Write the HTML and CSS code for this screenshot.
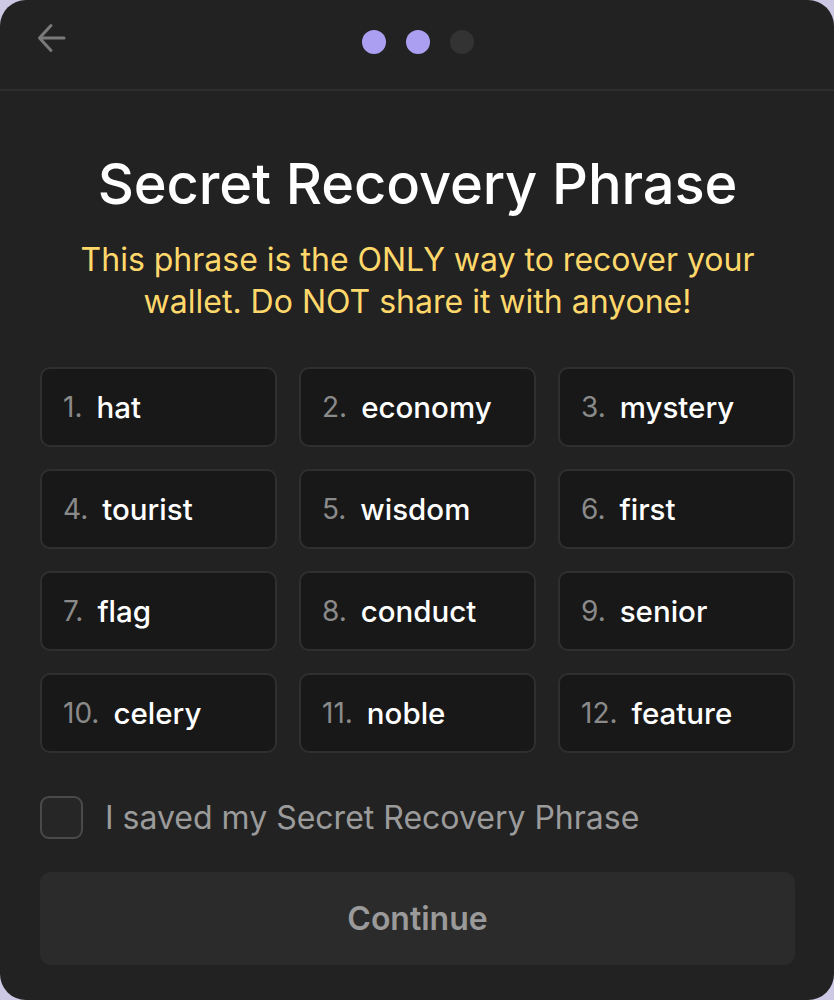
FILE: index.html
```html
<!DOCTYPE html>
<html>
<head>
<meta charset="utf-8">
<link rel="stylesheet" href="styles.css">
</head>
<body>
<div class="window">
  <header class="topbar">
    <button class="back" aria-label="Back">
      <svg width="30" height="30" viewBox="0 0 30 30" fill="none" stroke="#7a7a7a" stroke-width="3" stroke-linecap="round" stroke-linejoin="round">
        <path d="M28 15H4M15 2.5L3.5 15L15 27.5"/>
      </svg>
    </button>
    <div class="steps">
      <span class="dot on"></span>
      <span class="dot on"></span>
      <span class="dot"></span>
    </div>
  </header>
  <main class="content">
    <h1 class="title">Secret Recovery Phrase</h1>
    <p class="warning">This phrase is the ONLY way to recover your wallet. Do NOT share it with anyone!</p>
    <div class="grid">
      <div class="word"><span class="num">1.</span><span class="w">hat</span></div>
      <div class="word"><span class="num">2.</span><span class="w">economy</span></div>
      <div class="word"><span class="num">3.</span><span class="w">mystery</span></div>
      <div class="word"><span class="num">4.</span><span class="w">tourist</span></div>
      <div class="word"><span class="num">5.</span><span class="w">wisdom</span></div>
      <div class="word"><span class="num">6.</span><span class="w">first</span></div>
      <div class="word"><span class="num">7.</span><span class="w">flag</span></div>
      <div class="word"><span class="num">8.</span><span class="w">conduct</span></div>
      <div class="word"><span class="num">9.</span><span class="w">senior</span></div>
      <div class="word"><span class="num">10.</span><span class="w">celery</span></div>
      <div class="word"><span class="num">11.</span><span class="w">noble</span></div>
      <div class="word"><span class="num">12.</span><span class="w">feature</span></div>
    </div>
    <label class="check">
      <span class="box"></span>
      <span class="label">I saved my Secret Recovery Phrase</span>
    </label>
    <button class="continue">Continue</button>
  </main>
</div>
</body>
</html>
```
FILE: styles.css
```css
* { box-sizing: border-box; }
html, body {
  margin: 0;
  padding: 0;
  background: #cdc9e4;
}
body {
  font-family: Inter, "Noto Sans", sans-serif;
  width: 834px;
  height: 1000px;
  overflow: hidden;
}
.window {
  width: 834px;
  height: 1000px;
  background: #222222;
  border-radius: 26px;
  overflow: hidden;
  display: flex;
  flex-direction: column;
}
.topbar {
  height: 91px;
  flex: none;
  border-bottom: 2px solid #2e2e2e;
  display: flex;
  align-items: flex-start;
  justify-content: center;
  position: relative;
}
.back {
  position: absolute;
  left: 36px;
  top: 23px;
  background: none;
  border: 0;
  padding: 0;
  width: 30px;
  height: 30px;
  display: flex;
}
.steps {
  display: flex;
  gap: 20px;
  margin-top: 30px;
  margin-left: 2px;
}
.dot {
  width: 24px;
  height: 24px;
  border-radius: 50%;
  background: #333333;
}
.dot.on { background: #ab9ff2; }
.content {
  padding: 0 39px 0 40px;
  display: flex;
  flex-direction: column;
}
.title {
  margin: 60px 0 0;
  font-size: 56px;
  font-weight: 500;
  color: #ffffff;
  text-align: center;
  line-height: 66px;
  letter-spacing: -0.1px;
}
.warning {
  margin: 22px 18px 0;
  font-size: 32px;
  line-height: 42px;
  color: #ffd86b;
  text-align: center;
}
.grid {
  margin-top: 44px;
  display: grid;
  grid-template-columns: repeat(3, 1fr);
  gap: 22px 22px;
}
.word {
  height: 80px;
  background: #181818;
  border: 2px solid #2f2f2f;
  border-radius: 10px;
  display: flex;
  align-items: center;
  padding: 0 21px;
  gap: 14px;
}
.num { color: #8a8a8a; font-weight: 400; font-size: 28px; }
.w { color: #ffffff; font-weight: 500; font-size: 29.5px; }
.check {
  margin-top: 43px;
  display: flex;
  align-items: center;
  gap: 22px;
}
.box {
  width: 43px;
  height: 43px;
  border: 2px solid #4a4a4a;
  border-radius: 9px;
  background: #262626;
}
.label {
  color: #9b9b9b;
  font-size: 32px;
}
.continue {
  margin-top: 33px;
  height: 93px;
  border: 0;
  border-radius: 11px;
  background: #2b2b2b;
  color: #9a9a9a;
  font-family: inherit;
  font-size: 32px;
  font-weight: 600;
}
```
